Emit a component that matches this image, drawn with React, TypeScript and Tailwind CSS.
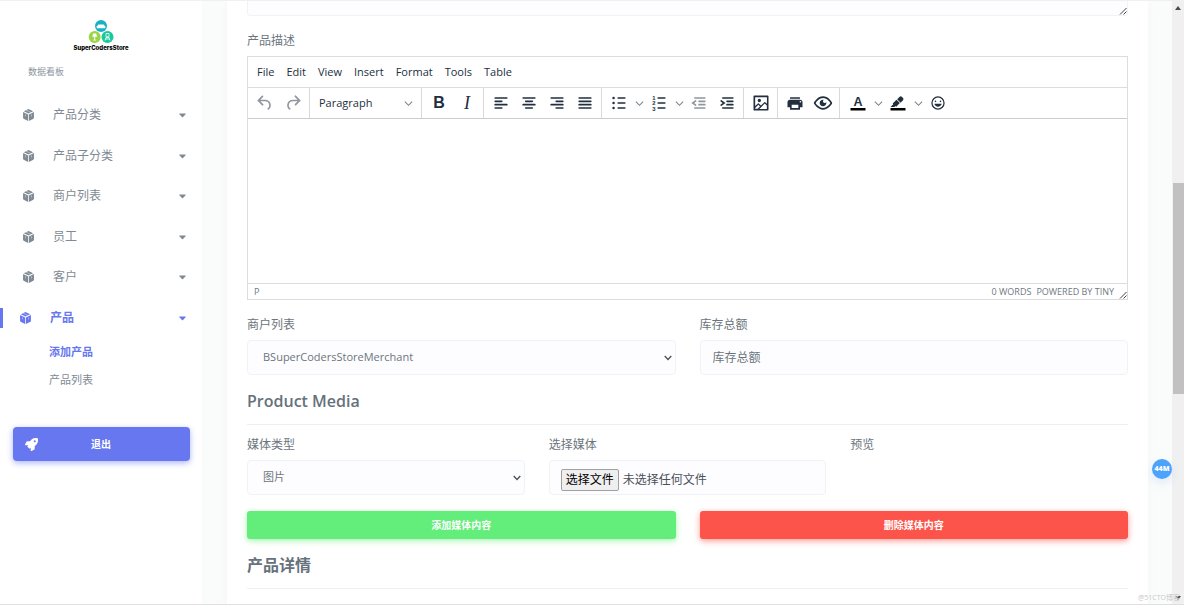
import { useRef, useState } from "react";
import type { ReactNode } from "react";
import { FaCaretDown, FaRocket } from "react-icons/fa";

const navItems = ["产品分类", "产品子分类", "商户列表", "员工", "客户", "产品"];
const activeItem = "产品";

const menus = ["File", "Edit", "View", "Insert", "Format", "Tools", "Table"];

const fieldClass = "h-[35px] w-full rounded border border-[#f1f2f8] bg-[#fdfdff] text-[#6c757d] outline-none";
const labelClass = "mb-[6px] block text-xs leading-[18px] text-[#6c757d]";

function Icon({ children }: { children: ReactNode }) {
  return (
    <svg viewBox="0 0 24 24" className="h-5 w-5 fill-[#222f3e]" aria-hidden="true">
      {children}
    </svg>
  );
}

// each bar is [x1, x2, y]
function Bars({ bars }: { bars: number[][] }) {
  return (
    <g stroke="#222f3e" strokeWidth="2" strokeLinecap="round">
      {bars.map(([x1, x2, y]) => (
        <line key={y} x1={x1} x2={x2} y1={y} y2={y} />
      ))}
    </g>
  );
}

function Tool({ label, disabled, children }: { label: string; disabled?: boolean; children: ReactNode }) {
  return (
    <button
      type="button"
      aria-label={label}
      disabled={disabled}
      className="flex h-[30px] w-7 items-center justify-center disabled:opacity-50"
    >
      {children}
    </button>
  );
}

function Chevron() {
  return (
    <svg viewBox="0 0 10 10" className="h-[9px] w-[9px]" fill="none" stroke="#7a828b" strokeWidth="1.2" aria-hidden="true">
      <path d="M1 3l4 4 4-4" />
    </svg>
  );
}

function SplitArrow({ label }: { label: string }) {
  return (
    <button type="button" aria-label={label} className="flex h-[30px] w-3 items-center justify-center">
      <Chevron />
    </button>
  );
}

function Group({ children, last }: { children: ReactNode; last?: boolean }) {
  return (
    <div className={last ? "flex pl-1" : "flex border-r border-[#d9d9d9] pr-[2px] pl-[3px]"}>{children}</div>
  );
}

function Grip() {
  return (
    <svg viewBox="0 0 8 8" className="h-2 w-2" stroke="#444" strokeWidth="1" aria-hidden="true">
      <path d="M1 7.5L7.5 1M4.5 7.5l3-3" />
    </svg>
  );
}

function CubeIcon() {
  return (
    <svg viewBox="0 0 20 22" className="h-3 w-[11px]" fill="currentColor" aria-hidden="true">
      <path d="M10 0l8.500 4L10 8.300 1.500 4z" />
      <path d="M0 5.500L9.300 10V22L2 18.500Q0 17.500 0 15.500z" />
      <path d="M20 5.500L10.700 10V22L18 18.500Q20 17.500 20 15.500z" />
      <path d="M5.500 2l9 4.500M4.500 10v3.500M15.500 10v3.500" stroke="#fff" strokeWidth=".8" />
    </svg>
  );
}

function Logo() {
  return (
    <div className="flex flex-col items-center">
      <svg viewBox="0 0 26 24" className="h-6 w-[26px]" aria-hidden="true">
        <circle cx="13" cy="6" r="6" fill="#16b1c4" />
        <circle cx="6.700" cy="17" r="6" fill="#9bd444" />
        <circle cx="19.500" cy="17" r="6" fill="#17c99a" />
        <path d="M10.500 4.500h5q1 0 1 1.500h.8v2.200H8.700V6h.8q0-1.500 1-1.500z" fill="#fff" />
        <path d="M5.200 13.500h3l1 3.200H7.200v3.100h1v.8h-3v-.8h1v-3.100H4.200z" fill="#fff" />
        <path d="M18 13.500h3v3.300h-3zM17 20.500l1-3h3l1 3M17.500 19h4" fill="none" stroke="#fff" strokeWidth=".8" />
      </svg>
      <span className="font-['Inter'] text-[6px] leading-[7px] font-extrabold text-black">SuperCodersStore</span>
    </div>
  );
}

function Sidebar() {
  return (
    <aside className="w-[202px] shrink-0 bg-white pt-[19px]">
      <Logo />
      <p className="mt-[15px] pl-7 text-[9px] leading-3 text-[#8b949c]">数据看板</p>

      <nav className="mt-[17px] text-[#7f8a94]">
        <ul className="grid h-[243px] auto-rows-fr">
          {navItems.map((item) => (
            <li key={item} className="flex items-center">
              <a
                href="#"
                className={
                  item === activeItem
                    ? "flex h-5 w-full items-center border-l-[3px] border-[#6777ef] pr-4 pl-[17px] text-xs font-bold text-[#6777ef]"
                    : "flex h-5 w-full items-center pr-4 pl-[23px] text-xs"
                }
              >
                <CubeIcon />
                <span className="ml-[19px] flex-1">{item}</span>
                <FaCaretDown className="h-3 w-[7px]" />
              </a>
            </li>
          ))}
        </ul>
        <ul className="pl-[49px] text-[11px] leading-7">
          <li>
            <a href="#" className="font-bold text-[#6777ef]">添加产品</a>
          </li>
          <li>
            <a href="#">产品列表</a>
          </li>
        </ul>
      </nav>

      <button
        type="button"
        className="mx-[13px] mt-[33px] flex h-[34px] w-[177px] items-center rounded bg-[#6777ef] px-3 text-[10px] font-bold text-white shadow-[0_2px_6px_#acb5f6]"
      >
        <FaRocket className="h-[13px] w-[13px]" />
        <span className="flex-1 pr-[14px]">退出</span>
      </button>
    </aside>
  );
}

function Editor() {
  return (
    <div className="border border-[#dcdcdc] text-[11px] text-[#222f3e]">
      <div className="flex h-[30px] items-center gap-3 px-[9px]">
        {menus.map((menu) => (
          <button key={menu} type="button">
            {menu}
          </button>
        ))}
      </div>

      <div className="flex h-8 border-y border-t-[#dcdcdc] border-b-[#cccccc]">
        <Group>
          <Tool label="Undo" disabled>
            <Icon>
              <path d="M6.400 8H12c3.700 0 6.200 2 6.800 5.100.6 2.700-.4 5.600-2.300 6.800a1 1 0 0 1-1-1.800c1.100-.6 1.800-2.700 1.400-4.600-.5-2.100-2.100-3.500-4.900-3.500H6.400l3.300 3.300a1 1 0 1 1-1.400 1.400l-5-5a1 1 0 0 1 0-1.400l5-5a1 1 0 0 1 1.400 1.400L6.400 8z" />
            </Icon>
          </Tool>
          <Tool label="Redo" disabled>
            <Icon>
              <path d="M17.600 10H12c-2.800 0-4.400 1.400-4.900 3.500-.4 2 .3 4 1.400 4.600a1 1 0 1 1-1 1.800c-2-1.200-2.900-4.100-2.300-6.800.6-3 3-5.100 6.800-5.100h5.600l-3.300-3.300a1 1 0 1 1 1.400-1.400l5 5a1 1 0 0 1 0 1.400l-5 5a1 1 0 0 1-1.400-1.400l3.300-3.300z" />
            </Icon>
          </Tool>
        </Group>
        <button
          type="button"
          className="flex w-28 items-center justify-between border-r border-[#d9d9d9] pr-2 pl-[9px]"
        >
          Paragraph
          <Chevron />
        </button>
        <Group>
          <Tool label="Bold">
            <span className="font-['Liberation_Sans'] text-base font-bold">B</span>
          </Tool>
          <Tool label="Italic">
            <span className="font-['Liberation_Serif'] text-lg italic">I</span>
          </Tool>
        </Group>
        <Group>
          <Tool label="Align left">
            <Icon><Bars bars={[[5, 19, 6], [5, 13, 10], [5, 19, 14], [5, 13, 18]]} /></Icon>
          </Tool>
          <Tool label="Align center">
            <Icon><Bars bars={[[5, 19, 6], [8, 16, 10], [5, 19, 14], [8, 16, 18]]} /></Icon>
          </Tool>
          <Tool label="Align right">
            <Icon><Bars bars={[[5, 19, 6], [11, 19, 10], [5, 19, 14], [11, 19, 18]]} /></Icon>
          </Tool>
          <Tool label="Justify">
            <Icon><Bars bars={[[5, 19, 6], [5, 19, 10], [5, 19, 14], [5, 19, 18]]} /></Icon>
          </Tool>
        </Group>
        <Group>
          <Tool label="Bullet list">
            <Icon>
              <Bars bars={[[11, 19, 6], [11, 19, 12], [11, 19, 18]]} />
              <circle cx="5.500" cy="6" r="1.500" />
              <circle cx="5.500" cy="12" r="1.500" />
              <circle cx="5.500" cy="18" r="1.500" />
            </Icon>
          </Tool>
          <SplitArrow label="Bullet styles" />
          <Tool label="Numbered list">
            <Icon>
              <Bars bars={[[11, 19, 6], [11, 19, 12], [11, 19, 18]]} />
              <g fontSize="7" fontWeight="700" fontFamily="Liberation Sans">
                <text x="4" y="8">1</text>
                <text x="4" y="14.500">2</text>
                <text x="4" y="21">3</text>
              </g>
            </Icon>
          </Tool>
          <SplitArrow label="Number styles" />
          <Tool label="Decrease indent" disabled>
            <Icon>
              <Bars bars={[[7, 19, 6], [12, 19, 10], [12, 19, 14], [7, 19, 18]]} />
              <path d="M8 9.500l-3.500 2.500L8 14.500" fill="none" stroke="#222f3e" strokeWidth="2" strokeLinecap="round" />
            </Icon>
          </Tool>
          <Tool label="Increase indent">
            <Icon>
              <Bars bars={[[7, 19, 6], [12, 19, 10], [12, 19, 14], [7, 19, 18]]} />
              <path d="M5 9.500l3.500 2.500L5 14.500" fill="none" stroke="#222f3e" strokeWidth="2" strokeLinecap="round" />
            </Icon>
          </Tool>
        </Group>
        <Group>
          <Tool label="Insert image">
            <Icon>
              <path
                fillRule="evenodd"
                d="M5 15.700l3.300-3.200c.3-.3.7-.3 1 0L12 15l4.100-4c.3-.4.8-.4 1 0l2 1.900V5H5v10.700zM5 18v1h3l2.800-2.900-2-2L5 17.900zm14-3l-2.500-2.400-6.400 6.500H19v-4zM4 3h16c.6 0 1 .4 1 1v16c0 .6-.4 1-1 1H4a1 1 0 0 1-1-1V4c0-.6.4-1 1-1zm6 8a2 2 0 1 0 0-4 2 2 0 0 0 0 4z"
              />
            </Icon>
          </Tool>
        </Group>
        <Group>
          <Tool label="Print">
            <Icon>
              <path
                fillRule="evenodd"
                d="M18 8H6a3 3 0 0 0-3 3v6h3v3h12v-3h3v-6a3 3 0 0 0-3-3zm-2 10H8v-4h8v4zm2.500-6.500a1 1 0 1 1 0-2 1 1 0 0 1 0 2zM6.500 5h11c.3 0 .5.300.5.600V7H6V5.600c0-.3.200-.6.5-.6z"
              />
            </Icon>
          </Tool>
          <Tool label="Preview">
            <Icon>
              <path
                fillRule="evenodd"
                d="M3.500 12.500c.5.8 1.100 1.600 1.800 2.300 2 2 4.200 3.200 6.700 3.200s4.700-1.200 6.700-3.200a16.200 16.200 0 0 0 2.100-2.800 15.700 15.700 0 0 0-2.100-2.800c-2-2-4.200-3.200-6.700-3.200a9.300 9.300 0 0 0-6.700 3.200A16.200 16.200 0 0 0 3.200 12c0 .2.200.3.3.5zm-2.400-1l.7-1.200L4 7.800C6.200 5.400 8.900 4 12 4c3 0 5.800 1.400 8.100 3.800a18.200 18.200 0 0 1 2.800 3.700v1l-.7 1.200a18.200 18.200 0 0 1-2.100 2.500c-2.300 2.400-5 3.800-8.100 3.800-3 0-5.800-1.400-8.100-3.800a18.200 18.200 0 0 1-2.800-3.700 1 1 0 0 1 0-1zm12-3.300a2 2 0 1 0 2.700 2.600 4 4 0 1 1-2.600-2.600z"
              />
            </Icon>
          </Tool>
        </Group>
        <Group last>
          <Tool label="Text color">
            <Icon>
              <path d="M3 18h18v3H3z" fill="#000" />
              <text x="12" y="15.500" textAnchor="middle" fontSize="15" fontWeight="700" fontFamily="Liberation Sans">A</text>
            </Icon>
          </Tool>
          <SplitArrow label="Text color menu" />
          <Tool label="Background color">
            <Icon>
              <path d="M3 18h18v3H3z" fill="#000" />
              <path d="M7.700 16.700H3l3.300-3.300-.7-.8L10.200 8l4 4.100-4 4.200c-.2.2-.6.2-.8 0l-.6-.7-1.100 1.100zm5-7.500L11 7.400l3-2.900a2 2 0 0 1 2.600 0L18 6c.7.7.7 2 0 2.700l-2.900 2.900-1.800-1.800-.5-.6" />
            </Icon>
          </Tool>
          <SplitArrow label="Background color menu" />
          <Tool label="Emoticons">
            <Icon>
              <path
                fillRule="evenodd"
                d="M9 11c.6 0 1-.4 1-1s-.4-1-1-1a1 1 0 0 0-1 1c0 .6.400 1 1 1zm6 0c.6 0 1-.4 1-1s-.4-1-1-1a1 1 0 0 0-1 1c0 .6.400 1 1 1zm-3 5.500c2.100 0 4-1.500 4.400-3.500H7.600c.5 2 2.300 3.500 4.400 3.500zM12 4a8 8 0 1 0 0 16 8 8 0 0 0 0-16zm0 14.500a6.500 6.500 0 1 1 0-13 6.500 6.500 0 0 1 0 13z"
              />
            </Icon>
          </Tool>
        </Group>
      </div>

      <textarea aria-label="产品描述" className="block h-[164px] w-full resize-none p-3 outline-none" />

      <div className="flex h-4 items-end border-t border-[#dcdcdc] pl-[6px] text-[9px] leading-[14px] text-[#6f7882]">
        <span className="flex-1">P</span>
        <span className="mr-[5px]">0 WORDS</span>
        <a href="#" className="mr-[5px]">POWERED BY TINY</a>
        <Grip />
      </div>
    </div>
  );
}

function SelectField({ id, label, option }: { id: string; label: string; option: string }) {
  return (
    <div>
      <label htmlFor={id} className={labelClass}>{label}</label>
      <div className="relative">
        <select id={id} className={`${fieldClass} appearance-none px-[15px] text-[11px]`}>
          <option>{option}</option>
        </select>
        <svg
          viewBox="0 0 8 6"
          className="pointer-events-none absolute top-[15px] right-1 h-[6px] w-2"
          fill="none"
          stroke="#495057"
          strokeWidth="1.300"
          aria-hidden="true"
        >
          <path d="M.7 1L4 4.500 7.300 1" />
        </svg>
      </div>
    </div>
  );
}

function FilePicker() {
  const inputRef = useRef<HTMLInputElement>(null);
  const [fileName, setFileName] = useState("");

  return (
    <div>
      <label htmlFor="media-file" className={labelClass}>选择媒体</label>
      <div className="flex h-[35px] items-center gap-1 rounded border border-[#f1f2f8] bg-[#fdfdff] px-[11px] pt-1 text-xs text-[#495057]">
        <input
          ref={inputRef}
          id="media-file"
          type="file"
          className="sr-only"
          onChange={(event) => setFileName(event.target.files?.[0]?.name ?? "")}
        />
        <button
          type="button"
          onClick={() => inputRef.current?.click()}
          className="h-[22px] rounded-xs border border-[#a0a0a0] bg-[#efefef] px-1 text-black"
        >
          选择文件
        </button>
        <span>{fileName || "未选择任何文件"}</span>
      </div>
    </div>
  );
}

function SectionTitle({ children }: { children: ReactNode }) {
  return (
    <h3 className="mt-[14px] mb-[11px] border-b border-[#eeeff1] pb-[11px] text-base leading-6 font-semibold text-[#66717b]">
      {children}
    </h3>
  );
}

function ProductForm() {
  return (
    <form className="min-h-full bg-white px-5 shadow-[0_4px_8px_rgba(0,0,0,0.03)]">
      <div className="flex h-[15px] items-end justify-end rounded-b border border-t-0 border-[#f1f2f8] bg-[#fdfdff]">
        <Grip />
      </div>

      <div className="mt-4">
        <span className={labelClass}>产品描述</span>
        <Editor />
      </div>

      <div className="mt-4 grid grid-cols-2 gap-6">
        <SelectField id="merchant" label="商户列表" option="BSuperCodersStoreMerchant" />
        <div>
          <label htmlFor="stock" className={labelClass}>库存总额</label>
          <input
            id="stock"
            type="text"
            placeholder="库存总额"
            className={`${fieldClass} px-3 text-xs placeholder:text-[#6c757d]`}
          />
        </div>
      </div>

      <SectionTitle>Product Media</SectionTitle>

      <div className="grid grid-cols-3 gap-6">
        <SelectField id="media-type" label="媒体类型" option="图片" />
        <FilePicker />
        <div>
          <span className={labelClass}>预览</span>
        </div>
      </div>

      <div className="mt-4 grid grid-cols-2 gap-6 text-[10px] font-bold text-white">
        <button type="button" className="h-7 rounded-[3px] bg-[#63ed7a] shadow-[0_2px_6px_#a8f5b4]">
          添加媒体内容
        </button>
        <button type="button" className="h-7 rounded-[3px] bg-[#fc544b] shadow-[0_2px_6px_#fd9b96]">
          删除媒体内容
        </button>
      </div>

      <SectionTitle>产品详情</SectionTitle>
    </form>
  );
}

function Scrollbar() {
  return (
    <div className="flex w-3 shrink-0 flex-col items-center bg-[#f0f0f0] text-[#4a4a4a]" aria-hidden="true">
      <svg viewBox="0 0 6 4" className="mt-[5px] h-1 w-[6px]" fill="currentColor">
        <path d="M3 0l3 4H0z" />
      </svg>
      <div className="mt-[173px] h-[211px] w-[11px] self-end bg-[#c1c1c1]" />
      <svg viewBox="0 0 6 4" className="mt-auto mb-1 h-1 w-[6px]" fill="currentColor">
        <path d="M0 0h6L3 4z" />
      </svg>
    </div>
  );
}

export default function App() {
  return (
    <div className="relative flex h-screen overflow-hidden border-y border-t-[#f0f0f0] border-b-[#dfdfdf] bg-[#fafcfb] font-['Open_Sans','Noto_Sans_CJK_SC',sans-serif]">
      <Sidebar />
      <main className="min-w-0 flex-1 overflow-hidden pr-6 pl-[25px]">
        <ProductForm />
      </main>
      <Scrollbar />

      <div className="absolute right-3 bottom-[125px] flex h-5 w-5 items-center justify-center rounded-full bg-[#4ba3fb] text-[7px] font-extrabold text-white shadow-[0_4px_10px_rgba(75,120,251,0.15)]">
        44M
      </div>
      <span className="absolute right-1 bottom-0 text-[7px] leading-3 text-[#c8c8c8]">@51CTO博客</span>
    </div>
  );
}
